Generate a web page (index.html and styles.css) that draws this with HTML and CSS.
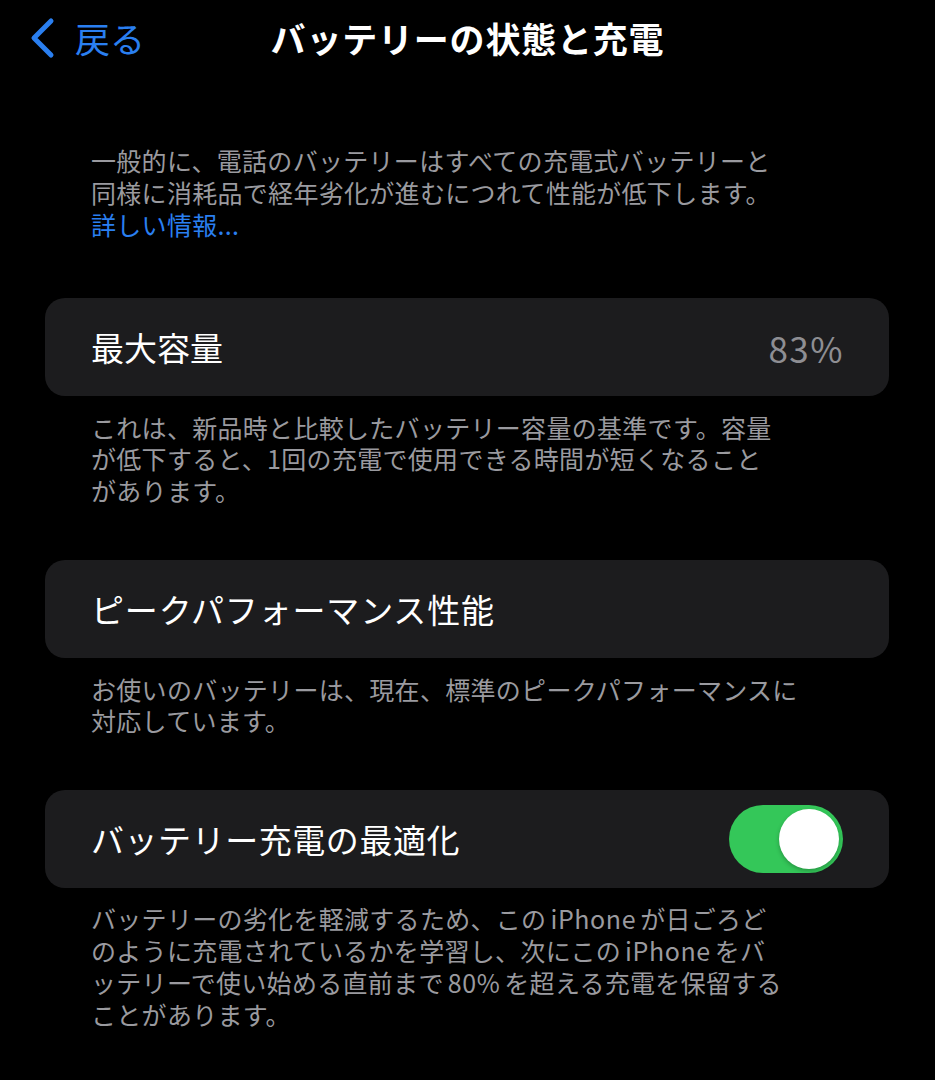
FILE: index.html
```html
<!DOCTYPE html>
<html lang="ja">
<head>
<meta charset="utf-8">
<link rel="stylesheet" href="styles.css">
</head>
<body>
<header class="nav">
  <div class="back">
    <svg class="chev" width="28" height="42" viewBox="0 0 28 42"><path d="M23 4 L6 21 L23 38" fill="none" stroke="#2a7ff0" stroke-width="5" stroke-linecap="round" stroke-linejoin="round"/></svg>
    <span class="back-text">戻る</span>
  </div>
  <h1 class="title">バッテリーの状態と充電</h1>
</header>
<main class="content">
  <p class="intro">一般的に、電話のバッテリーはすべての充電式バッテリーと<br>同様に消耗品で経年劣化が進むにつれて性能が低下します。<br><span class="link">詳しい情報...</span></p>

  <section class="card">
    <span class="label">最大容量</span>
    <span class="value">83%</span>
  </section>
  <p class="caption">これは、新品時と比較したバッテリー容量の基準です。容量<br>が低下すると、1回の充電で使用できる時間が短くなること<br>があります。</p>

  <section class="card">
    <span class="label wide">ピークパフォーマンス性能</span>
  </section>
  <p class="caption">お使いのバッテリーは、現在、標準のピークパフォーマンスに<br>対応しています。</p>

  <section class="card">
    <span class="label mid">バッテリー充電の最適化</span>
    <span class="toggle"><span class="knob"></span></span>
  </section>
  <p class="caption">バッテリーの劣化を軽減するため、この<span class="latin">iPhone</span>が日ごろど<br>のように充電されているかを学習し、次にこの<span class="latin">iPhone</span>をバ<br>ッテリーで使い始める直前まで<span class="latin">80%</span>を超える充電を保留する<br>ことがあります。</p>
</main>
</body>
</html>
```
FILE: styles.css
```css
html, body {
  margin: 0;
  padding: 0;
  background: #000;
}
body {
  width: 935px;
  height: 1080px;
  overflow: hidden;
  font-family: "Noto Sans CJK JP", "Noto Sans", sans-serif;
  color: #fff;
}
.nav {
  position: relative;
  height: 78px;
  display: flex;
  align-items: center;
  justify-content: center;
}
.back {
  position: absolute;
  left: 28px;
  top: 17px;
  display: flex;
  align-items: center;
  gap: 19px;
}
.chev { display: block; }
.back-text {
  font-size: 35px;
  color: #2a7ff0;
  line-height: 42px;
}
.title {
  margin: 0;
  font-size: 35px;
  font-weight: 700;
  letter-spacing: 0.8px;
  line-height: 42px;
  margin-top: -2px;
}
.content {
  padding: 66px 46px 0 45px;
  display: flex;
  flex-direction: column;
}
.intro, .caption {
  margin: 0;
  font-size: 25px;
  letter-spacing: 0.3px;
  line-height: 32px;
  color: #9a9a9f;
  padding-left: 46px;
  white-space: nowrap;
}
.intro { margin-bottom: 58px; }
.link { color: #2a7ff0; }
.card {
  height: 98px;
  border-radius: 20px;
  background: #1c1c1e;
  display: flex;
  align-items: center;
  justify-content: space-between;
  padding: 0 46px;
}
.label {
  font-size: 33px;
  color: #fff;
}
.label.wide { letter-spacing: 0.85px; }
.label.mid { letter-spacing: 0.55px; }
.value {
  font-size: 35px;
  letter-spacing: 1.5px;
  margin-right: -1px;
  color: #8e8e93;
}
.caption {
  margin-top: 16px;
  margin-bottom: 54px;
  line-height: 31.3px;
}
.caption:last-child { line-height: 32px; margin-top: 14px; }
.latin { margin: 0 4px; letter-spacing: 0.6px; }
.toggle {
  width: 114px;
  height: 68px;
  border-radius: 34px;
  background: #34c759;
  display: flex;
  align-items: center;
  justify-content: flex-end;
  padding: 0 4px;
  box-sizing: border-box;
}
.knob {
  width: 60px;
  height: 60px;
  border-radius: 50%;
  background: #fff;
  box-shadow: 0 2px 4px rgba(0,0,0,0.25);
}
```
